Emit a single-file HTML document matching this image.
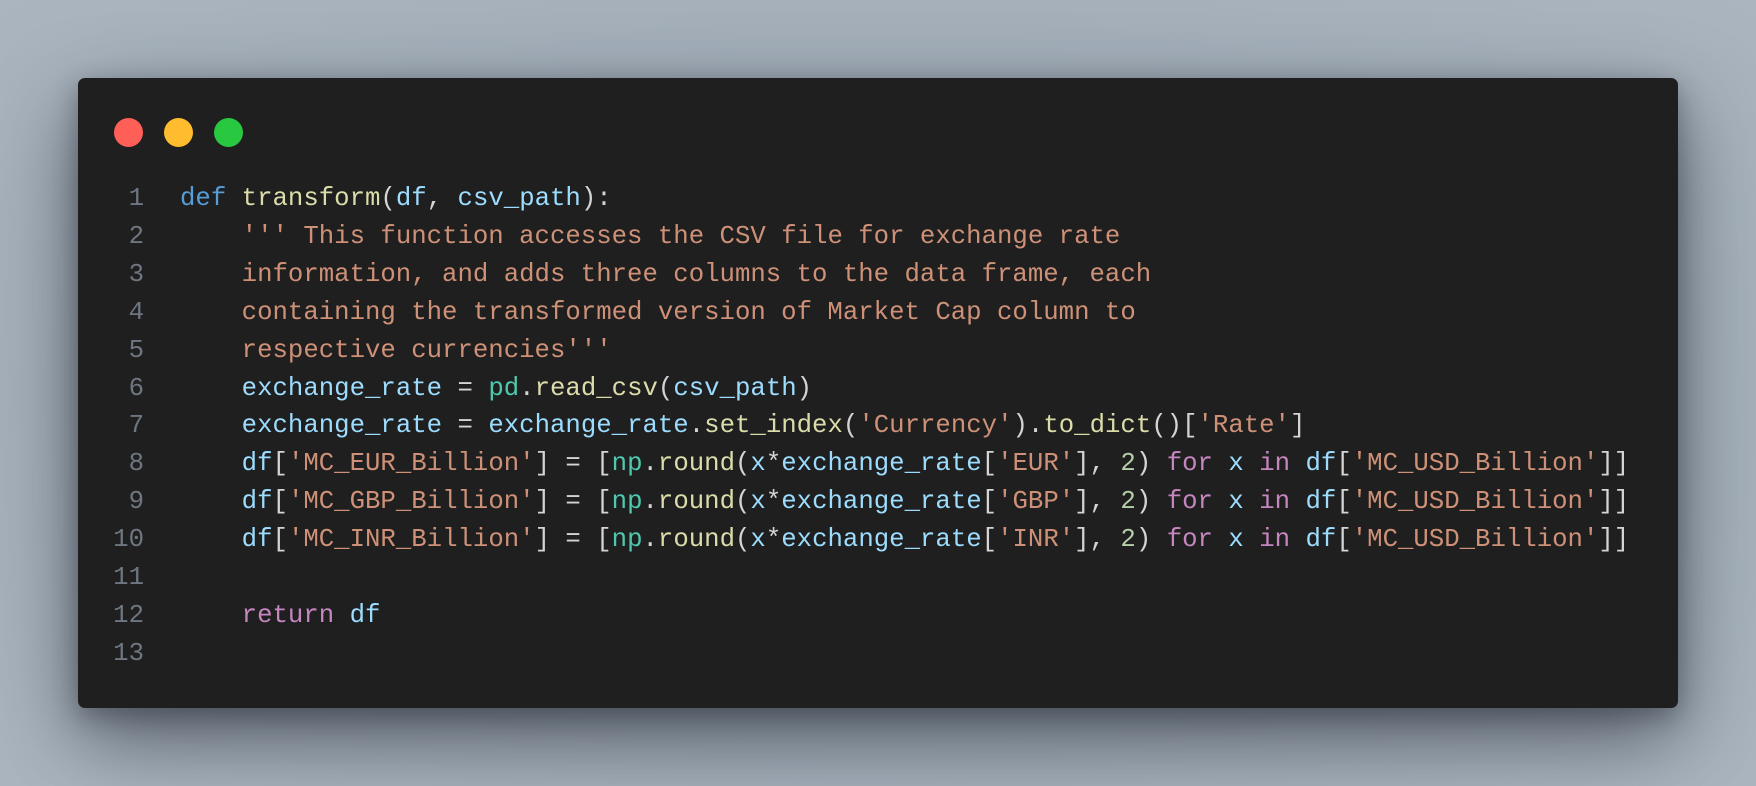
<!DOCTYPE html>
<html><head><meta charset="utf-8"><style>
html,body{margin:0;padding:0}
body{width:1756px;height:786px;overflow:hidden;background:radial-gradient(ellipse at 50% 50%,#98a3ad 0%,#a3aeb9 60%,#abb5bf 100%);position:relative}
.win{position:absolute;left:78px;top:78px;width:1600px;height:630px;background:#1f1f1f;border-radius:7px;box-shadow:0 30px 80px rgba(30,35,45,.6),0 8px 25px rgba(30,35,45,.35)}
.dot{position:absolute;top:118px;width:29px;height:29px;border-radius:50%}
.code{position:absolute;left:0;top:180px;font-family:"Liberation Mono",monospace;font-size:25.7px;line-height:37.9px;white-space:pre;color:#d4d4d4}
.ln{position:absolute;left:100px;width:44px;text-align:right;color:#6e7681;top:180px;font-family:"Liberation Mono",monospace;font-size:25.7px;line-height:37.9px;white-space:pre}
.k{color:#569cd6}.f{color:#dcdcaa}.v{color:#9cdcfe}.s{color:#ce9178}.c{color:#4ec9b0}.n{color:#b5cea8}.p{color:#c586c0}
</style></head><body>
<div class="win"></div>
<div class="dot" style="left:114px;background:#ff5f57"></div>
<div class="dot" style="left:164px;background:#febc2e"></div>
<div class="dot" style="left:214px;background:#28c840"></div>
<div class="ln">1
2
3
4
5
6
7
8
9
10
11
12
13</div>
<div class="code" style="left:180px"><span class="k">def</span> <span class="f">transform</span>(<span class="v">df</span>, <span class="v">csv_path</span>):
    <span class="s">''' This function accesses the CSV file for exchange rate</span>
<span class="s">    information, and adds three columns to the data frame, each</span>
<span class="s">    containing the transformed version of Market Cap column to</span>
<span class="s">    respective currencies'''</span>
    <span class="v">exchange_rate</span> = <span class="c">pd</span>.<span class="f">read_csv</span>(<span class="v">csv_path</span>)
    <span class="v">exchange_rate</span> = <span class="v">exchange_rate</span>.<span class="f">set_index</span>(<span class="s">'Currency'</span>).<span class="f">to_dict</span>()[<span class="s">'Rate'</span>]
    <span class="v">df</span>[<span class="s">'MC_EUR_Billion'</span>] = [<span class="c">np</span>.<span class="f">round</span>(<span class="v">x</span>*<span class="v">exchange_rate</span>[<span class="s">'EUR'</span>], <span class="n">2</span>) <span class="p">for</span> <span class="v">x</span> <span class="p">in</span> <span class="v">df</span>[<span class="s">'MC_USD_Billion'</span>]]
    <span class="v">df</span>[<span class="s">'MC_GBP_Billion'</span>] = [<span class="c">np</span>.<span class="f">round</span>(<span class="v">x</span>*<span class="v">exchange_rate</span>[<span class="s">'GBP'</span>], <span class="n">2</span>) <span class="p">for</span> <span class="v">x</span> <span class="p">in</span> <span class="v">df</span>[<span class="s">'MC_USD_Billion'</span>]]
    <span class="v">df</span>[<span class="s">'MC_INR_Billion'</span>] = [<span class="c">np</span>.<span class="f">round</span>(<span class="v">x</span>*<span class="v">exchange_rate</span>[<span class="s">'INR'</span>], <span class="n">2</span>) <span class="p">for</span> <span class="v">x</span> <span class="p">in</span> <span class="v">df</span>[<span class="s">'MC_USD_Billion'</span>]]

    <span class="p">return</span> <span class="v">df</span>
</div>
</body></html>
